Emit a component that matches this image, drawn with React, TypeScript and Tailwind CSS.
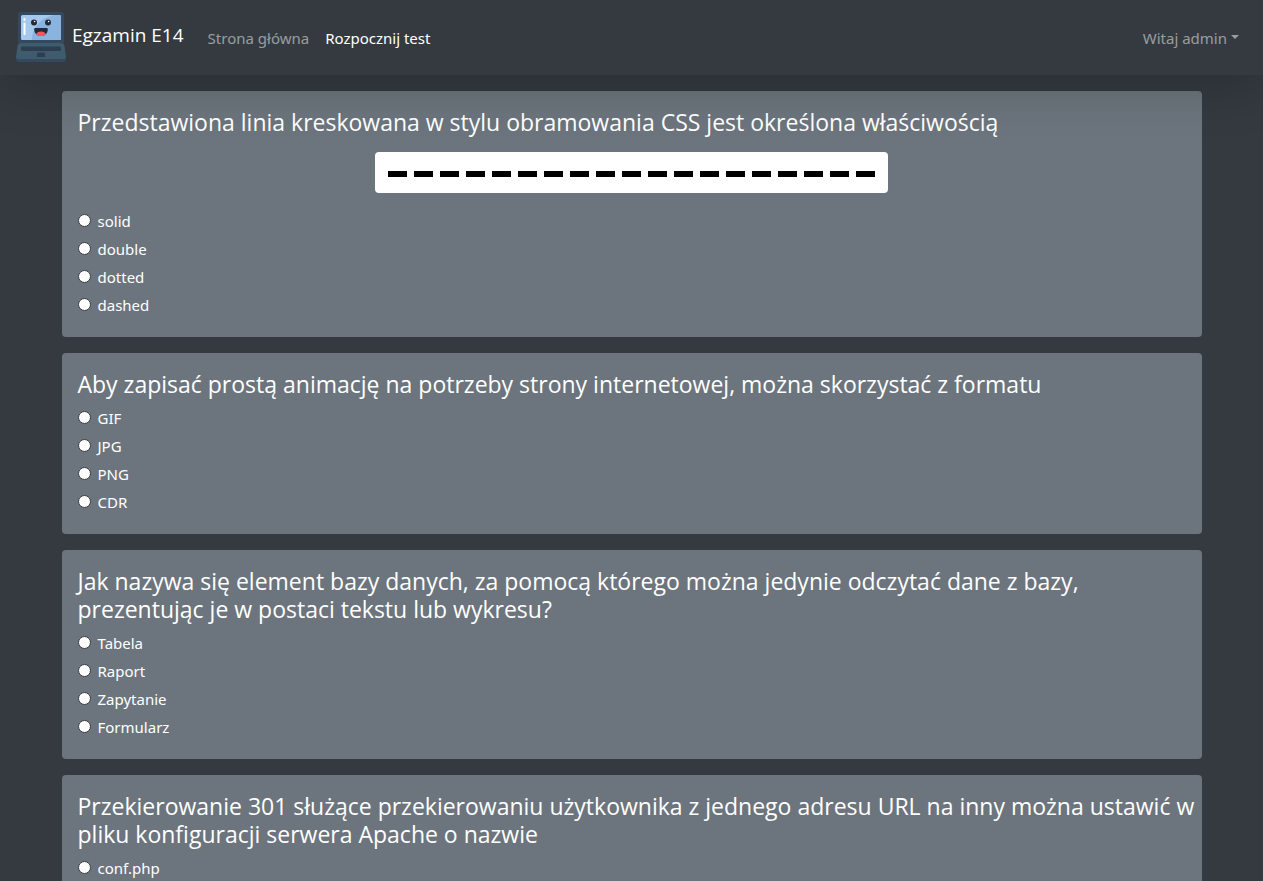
import { useState } from "react";

type Question = {
  id: string;
  text: string;
  answers: string[];
  picture?: boolean;
};

const questions: Question[] = [
  {
    id: "q1",
    text: "Przedstawiona linia kreskowana w stylu obramowania CSS jest określona właściwością",
    answers: ["solid", "double", "dotted", "dashed"],
    picture: true,
  },
  {
    id: "q2",
    text: "Aby zapisać prostą animację na potrzeby strony internetowej, można skorzystać z formatu",
    answers: ["GIF", "JPG", "PNG", "CDR"],
  },
  {
    id: "q3",
    text: "Jak nazywa się element bazy danych, za pomocą którego można jedynie odczytać dane z bazy, prezentując je w postaci tekstu lub wykresu?",
    answers: ["Tabela", "Raport", "Zapytanie", "Formularz"],
  },
  {
    id: "q4",
    text: "Przekierowanie 301 służące przekierowaniu użytkownika z jednego adresu URL na inny można ustawić w pliku konfiguracji serwera Apache o nazwie",
    answers: ["conf.php"],
  },
];

function LaptopLogo() {
  return (
    <svg className="size-[50px] shrink-0" viewBox="0 0 50 50" aria-hidden="true">
      <path d="M5 0h40q3 0 3 3v28H2V3q0-3 3-3z" fill="#34495e" />
      <rect x="5" y="3" width="40" height="25" rx="1.5" fill="#a4c9ec" />
      <path d="M38 3h5.500q1.500 0 1.500 1.500v22q0 1.500-1.500 1.500H16C16 15 25 6 38 3z" fill="#8bb3df" />
      <rect x="7.500" y="6" width="2" height="3" rx="0.800" fill="#fff" />
      <rect x="7.500" y="10.500" width="2" height="12.500" rx="0.900" fill="#fff" />
      <circle cx="18" cy="10.500" r="3" fill="#242a38" />
      <circle cx="32" cy="10.500" r="3" fill="#242a38" />
      <circle cx="18.600" cy="9.500" r="0.800" fill="#fff" />
      <circle cx="32.600" cy="9.500" r="0.800" fill="#fff" />
      <path d="M19.500 16h11q1.300 0 1.300 1.300c0 4-3 6.700-6.800 6.700s-6.800-2.700-6.800-6.700q0-1.300 1.300-1.300z" fill="#242a38" />
      <path d="M20.300 21.700c1.100-1.400 2.700-2.100 4.700-2.100s3.600.7 4.700 2.100C28.500 23.200 26.900 24 25 24s-3.500-.8-4.700-2.300z" fill="#ff5364" />
      <path d="M0 44h50v3q0 3-3 3H3q-3 0-3-3z" fill="#34495e" />
      <path d="M4.500 31h41q2.500 0 2.900 2.600L50 45q0 2-2.500 2h-45Q0 47 0 45l1.600-11.400Q2 31 4.500 31z" fill="#3f5c6c" />
      <rect x="5" y="34.500" width="40" height="4.500" rx="1.500" fill="#2c3e50" />
      <path d="M22.500 40.500h5q1 0 1.300 1l.5 3.500h-8.600l.5-3.500q.3-1 1.300-1z" fill="#2c3e50" />
    </svg>
  );
}

function DashedLine() {
  return (
    <svg
      className="mx-auto mt-4 mb-4 block h-[41px] w-[513px] max-w-full rounded bg-white"
      viewBox="0 0 513 41"
      role="img"
      aria-labelledby="q1-text"
    >
      <path d="M13 22h487" stroke="#000" strokeWidth="6" strokeDasharray="19 7" shapeRendering="crispEdges" />
    </svg>
  );
}

function Navbar() {
  return (
    <header className="relative z-10 flex items-center bg-[#343a40] px-4 pt-3 pb-[13px] shadow-[0_16px_48px_rgba(0,0,0,0.175)]">
      <a href="#start" className="mr-4 flex items-start gap-[6px] font-['Segoe_UI','Open_Sans',sans-serif] text-[19px] leading-[30px] text-white">
        <LaptopLogo />
        <span className="pt-2">Egzamin E14</span>
      </a>
      <nav className="flex grow items-center justify-between pt-[2px] text-[15px] leading-6">
        <div className="flex">
          <a href="#glowna" className="px-2 text-white/50">Strona główna</a>
          <a href="#test" className="px-2 text-white">Rozpocznij test</a>
        </div>
        <button type="button" className="flex items-center gap-1 px-2 text-white/50">
          Witaj admin
          <span className="mb-[2px] border-x-4 border-t-4 border-x-transparent border-t-current" />
        </button>
      </nav>
    </header>
  );
}

function QuestionCard({ question }: { question: Question }) {
  const [selected, setSelected] = useState<string | null>(null);
  return (
    <section className="mt-4 rounded bg-[#6c757d] px-4 pt-[17px] pb-4" role="radiogroup" aria-labelledby={`${question.id}-text`}>
      <h4
        id={`${question.id}-text`}
        className="-mr-3 mb-2 font-['Segoe_UI','Open_Sans',sans-serif] text-[23px] leading-7"
      >
        {question.text}
      </h4>
      {question.picture && <DashedLine />}
      {question.answers.map((answer, index) => {
        const id = `${question.id}-${index}`;
        return (
          <div key={id} className="mb-1 flex h-6 items-center gap-[7px]">
            <input
              type="radio"
              id={id}
              name={question.id}
              checked={selected === answer}
              onChange={() => setSelected(answer)}
              className="mb-[2px] size-[13px] appearance-none rounded-full border border-[#3c3c3c] bg-white checked:border-4 checked:border-[#0075ff]"
            />
            <label htmlFor={id} className="text-[15px] leading-6">{answer}</label>
          </div>
        );
      })}
    </section>
  );
}

export default function App() {
  return (
    <div className="min-h-screen bg-[#343a40] font-['Segoe_UI','Noto_Sans',sans-serif] text-white">
      <Navbar />
      <main className="mx-auto max-w-[1140px] pb-4">
        {questions.map((question) => (
          <QuestionCard key={question.id} question={question} />
        ))}
      </main>
    </div>
  );
}
